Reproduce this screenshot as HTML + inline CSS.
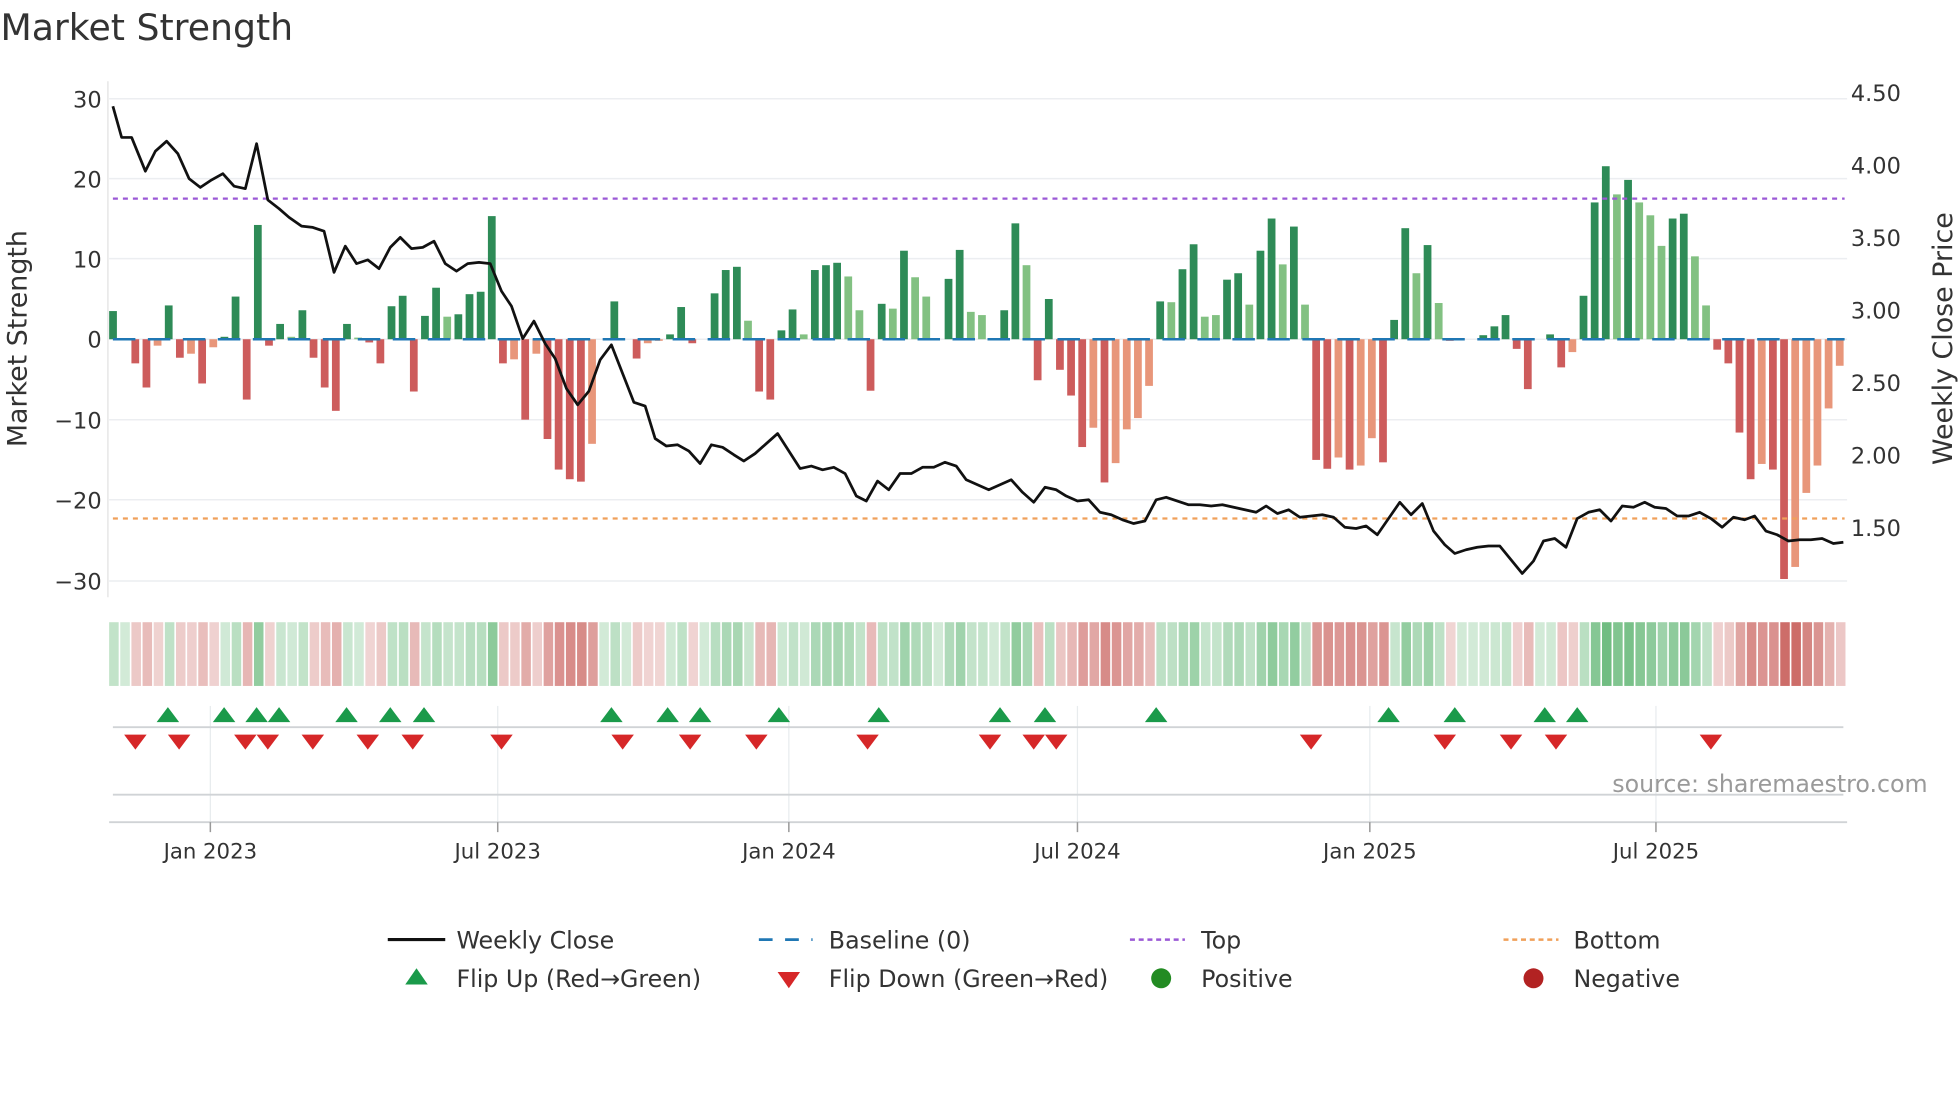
<!DOCTYPE html>
<html><head><meta charset="utf-8"><style>
html,body{margin:0;padding:0;background:#fff;width:1960px;height:1102px;overflow:hidden}
svg{display:block}
text{font-family:"DejaVu Sans","Liberation Sans",sans-serif;fill:#333}
</style></head><body>
<svg id="s" width="1960" height="1102" viewBox="0 0 1568 882" xmlns="http://www.w3.org/2000/svg">
<text x="0" y="32" font-size="29">Market Strength</text>
<g stroke="#eceef1" stroke-width="1.2">
<line x1="87" x2="1478" y1="79" y2="79"/><line x1="87" x2="1478" y1="143" y2="143"/><line x1="87" x2="1478" y1="207" y2="207"/><line x1="87" x2="1478" y1="271.5" y2="271.5"/><line x1="87" x2="1478" y1="336" y2="336"/><line x1="87" x2="1478" y1="400" y2="400"/><line x1="87" x2="1478" y1="465" y2="465"/>
</g>
<line x1="86" x2="86" y1="65" y2="478" stroke="#e6e6e6" stroke-width="1.2"/>
<g font-size="18" text-anchor="end">
<text x="81" y="86">30</text><text x="81" y="150">20</text><text x="81" y="214">10</text><text x="81" y="278">0</text><text x="81" y="343">−10</text><text x="81" y="407">−20</text><text x="81" y="472">−30</text>
</g>
<g font-size="18">
<text x="1481" y="81">4.50</text><text x="1481" y="139">4.00</text><text x="1481" y="197">3.50</text><text x="1481" y="255">3.00</text><text x="1481" y="313">2.50</text><text x="1481" y="371">2.00</text><text x="1481" y="429">1.50</text>
</g>
<text font-size="21.5" transform="translate(21,271) rotate(-90)" text-anchor="middle">Market Strength</text>
<text font-size="21.5" transform="translate(1562,271) rotate(-90)" text-anchor="middle">Weekly Close Price</text>
<g id="bars"></g>
<line x1="90" x2="1476" y1="271.5" y2="271.5" stroke="#1f77b4" stroke-width="2" stroke-dasharray="18 10"/>
<line x1="90" x2="1476" y1="159" y2="159" stroke="#9b59d6" stroke-width="1.8" stroke-dasharray="4 4"/>
<line x1="90" x2="1476" y1="415" y2="415" stroke="#f0a05a" stroke-width="1.8" stroke-dasharray="4 4"/>
<polyline id="price" fill="none" stroke="#111" stroke-width="2.2" stroke-linejoin="round"/>
<g id="strip"></g>
<g stroke="#e8ecee" stroke-width="1">
<line x1="168" x2="168" y1="565" y2="658"/><line x1="398" x2="398" y1="565" y2="658"/><line x1="631" x2="631" y1="565" y2="658"/><line x1="862" x2="862" y1="565" y2="658"/><line x1="1096" x2="1096" y1="565" y2="658"/><line x1="1325" x2="1325" y1="565" y2="658"/>
</g>
<line x1="90" x2="1475" y1="582" y2="582" stroke="#d0d3d6" stroke-width="1.5"/>
<line x1="90" x2="1475" y1="636" y2="636" stroke="#d0d3d6" stroke-width="1.5"/>
<line x1="87" x2="1478" y1="658" y2="658" stroke="#d0d3d6" stroke-width="1.5"/>
<g stroke="#999" stroke-width="1.2">
<line x1="168" x2="168" y1="658" y2="666"/><line x1="398" x2="398" y1="658" y2="666"/><line x1="631" x2="631" y1="658" y2="666"/><line x1="862" x2="862" y1="658" y2="666"/><line x1="1096" x2="1096" y1="658" y2="666"/><line x1="1325" x2="1325" y1="658" y2="666"/>
</g>
<g id="tri"></g>
<g font-size="17" text-anchor="middle">
<text x="168" y="687">Jan 2023</text><text x="398" y="687">Jul 2023</text><text x="631" y="687">Jan 2024</text><text x="862" y="687">Jul 2024</text><text x="1096" y="687">Jan 2025</text><text x="1325" y="687">Jul 2025</text>
</g>
<text x="1290" y="634" font-size="19" style="fill:#9a9a9a">source: sharemaestro.com</text>
<g font-size="19">
<line x1="310" x2="356" y1="752" y2="752" stroke="#111" stroke-width="2.5"/><text x="365" y="759">Weekly Close</text>
<line x1="607" x2="650" y1="752" y2="752" stroke="#1f77b4" stroke-width="2.2" stroke-dasharray="11 10"/><text x="663" y="759">Baseline (0)</text>
<line x1="904" x2="948" y1="752" y2="752" stroke="#9b59d6" stroke-width="2" stroke-dasharray="4 3"/><text x="961" y="759">Top</text>
<line x1="1203" x2="1247" y1="752" y2="752" stroke="#f0a05a" stroke-width="2" stroke-dasharray="4 3"/><text x="1259" y="759">Bottom</text>
<polygon points="324,788 342,788 333,775" fill="#1a9a4a"/><text x="365" y="790">Flip Up (Red→Green)</text>
<polygon points="622,778 640,778 631,791" fill="#d62728"/><text x="663" y="790">Flip Down (Green→Red)</text>
<circle cx="929" cy="783" r="8" fill="#228b22"/><text x="961" y="790">Positive</text>
<circle cx="1227" cy="783" r="8" fill="#b22222"/><text x="1259" y="790">Negative</text>
</g>
</svg>
<script>
var NS="http://www.w3.org/2000/svg";
var V=[[3.5,'d'],[0,''],[-3,'r'],[-6,'r'],[-0.8,'s'],[4.2,'d'],[-2.3,'r'],[-1.8,'s'],[-5.5,'r'],[-1,'s'],[0.3,'d'],[5.3,'d'],[-7.5,'r'],[14.2,'d'],[-0.8,'r'],[1.9,'d'],[0.3,'l'],[3.6,'d'],[-2.3,'r'],[-6,'r'],[-8.9,'r'],[1.9,'d'],[0.2,'l'],[-0.4,'r'],[-3,'r'],[4.1,'d'],[5.4,'d'],[-6.5,'r'],[2.9,'d'],[6.4,'d'],[2.8,'l'],[3.1,'d'],[5.6,'d'],[5.9,'d'],[15.3,'d'],[-3,'r'],[-2.5,'s'],[-10,'r'],[-1.8,'s'],[-12.4,'r'],[-16.2,'r'],[-17.4,'r'],[-17.7,'r'],[-13,'s'],[0,''],[4.7,'d'],[0,''],[-2.4,'r'],[-0.5,'s'],[-0.2,'s'],[0.6,'d'],[4,'d'],[-0.5,'r'],[0,''],[5.7,'d'],[8.6,'d'],[9,'d'],[2.3,'l'],[-6.5,'r'],[-7.5,'r'],[1.1,'d'],[3.7,'d'],[0.6,'l'],[8.6,'d'],[9.2,'d'],[9.5,'d'],[7.8,'l'],[3.6,'l'],[-6.4,'r'],[4.4,'d'],[3.8,'l'],[11,'d'],[7.7,'l'],[5.3,'l'],[0,''],[7.5,'d'],[11.1,'d'],[3.4,'l'],[3,'l'],[0,''],[3.6,'d'],[14.4,'d'],[9.2,'l'],[-5.1,'r'],[5,'d'],[-3.8,'r'],[-7,'r'],[-13.4,'r'],[-11,'s'],[-17.8,'r'],[-15.4,'s'],[-11.2,'s'],[-9.8,'s'],[-5.8,'s'],[4.7,'d'],[4.6,'l'],[8.7,'d'],[11.8,'d'],[2.8,'l'],[3,'l'],[7.4,'d'],[8.2,'d'],[4.3,'l'],[11,'d'],[15,'d'],[9.3,'l'],[14,'d'],[4.3,'l'],[-15,'r'],[-16.1,'r'],[-14.7,'s'],[-16.2,'r'],[-15.7,'s'],[-12.3,'s'],[-15.3,'r'],[2.4,'d'],[13.8,'d'],[8.2,'l'],[11.7,'d'],[4.5,'l'],[-0.2,'r'],[0,''],[0,''],[0.5,'d'],[1.6,'d'],[3,'d'],[-1.2,'r'],[-6.2,'r'],[0,''],[0.6,'d'],[-3.5,'r'],[-1.6,'s'],[5.4,'d'],[17,'d'],[21.5,'d'],[18,'l'],[19.8,'d'],[17,'l'],[15.4,'l'],[11.6,'l'],[15,'d'],[15.6,'d'],[10.3,'l'],[4.2,'l'],[-1.3,'r'],[-3,'r'],[-11.6,'r'],[-17.4,'r'],[-15.5,'s'],[-16.2,'r'],[-29.8,'r'],[-28.3,'s'],[-19.1,'s'],[-15.7,'s'],[-8.6,'s'],[-3.3,'s']];
var C={d:'#2e8b57',l:'#82c182',r:'#cd5c5c',s:'#e8967a'};
var n=V.length,x0=90,x1=1472,step=(x1-x0)/(n-1);
var sstep=(1478-87)/n;
var bars=document.getElementById('bars'),strip=document.getElementById('strip');
function el(t,a,p){var e=document.createElementNS(NS,t);for(var k in a)e.setAttribute(k,a[k]);p.appendChild(e);return e;}
for(var i=0;i<n;i++){var v=V[i][0],x=x0+i*step;
 if(v!==0){var h=Math.abs(v)*6.44;el('rect',{x:x-3,y:v>0?271.5-h:271.5,width:6.2,height:h,fill:C[V[i][1]]},bars);}
 var a=0.22+Math.min(Math.abs(v),25)/25*0.55;var col=v>0?'rgba(50,160,75,'+a+')':v<0?'rgba(190,65,60,'+a+')':'rgba(50,160,75,0.22)';
 el('rect',{x:87+i*sstep,y:498,width:sstep-1.3,height:51,fill:col},strip);}
var P=[[90,85],[97,110],[105,110],[116,137],[124,121],[133,113],[142,123],[151,143],[160,150],[169,144],[178,139],[187,149],[196,151],[205,115],[214,160],[223,167],[231,174],[241,181],[250,182],[259,185],[267,218],[276,197],[285,211],[294,208],[303,215],[312,198],[320,190],[329,199],[338,198],[347,193],[356,211],[365,217],[374,211],[383,210],[392,211],[401,233],[409,245],[418,271],[427,257],[436,275],[444,287],[453,311],[462,324],[471,313],[480,288],[489,276],[498,299],[507,322],[516,325],[524,351],[533,357],[542,356],[551,361],[560,371],[569,356],[578,358],[587,364],[595,369],[604,363],[613,355],[622,347],[631,361],[640,375],[649,373],[658,376],[667,374],[676,379],[685,397],[693,401],[702,385],[711,392],[720,379],[729,379],[738,374],[747,374],[756,370],[765,373],[773,384],[782,388],[791,392],[800,388],[809,384],[818,394],[827,402],[836,390],[845,392],[853,397],[862,401],[871,400],[880,410],[889,412],[898,416],[907,419],[916,417],[925,400],[933,398],[942,401],[951,404],[960,404],[969,405],[978,404],[987,406],[996,408],[1005,410],[1013,405],[1022,411],[1031,408],[1040,414],[1049,413],[1058,412],[1067,414],[1076,422],[1085,423],[1093,421],[1102,428],[1111,415],[1120,402],[1129,412],[1138,403],[1147,425],[1156,436],[1164,443],[1173,440],[1182,438],[1191,437],[1200,437],[1209,448],[1218,459],[1227,449],[1235,433],[1244,431],[1253,438],[1262,415],[1271,410],[1280,408],[1289,417],[1298,405],[1307,406],[1316,402],[1324,406],[1333,407],[1342,413],[1351,413],[1360,410],[1369,415],[1378,422],[1387,414],[1396,416],[1404,413],[1413,425],[1422,428],[1431,433],[1440,432],[1449,432],[1458,431],[1467,435],[1475,434]];
document.getElementById('price').setAttribute('points',P.map(function(p){return p.join(',')}).join(' '));
var tri=document.getElementById('tri');
[134,179,205,223,277,312,339,489,534,560,623,703,800,836,925,1111,1164,1236,1262].forEach(function(x){el('polygon',{points:(x-9)+',578 '+(x+9)+',578 '+x+',566',fill:'#1a9a4a'},tri);});
[108,143,196,214,250,294,330,401,498,552,605,694,792,827,845,1049,1156,1209,1245,1369].forEach(function(x){el('polygon',{points:(x-9)+',588 '+(x+9)+',588 '+x+',600',fill:'#d62728'},tri);});
</script>
</body></html>
